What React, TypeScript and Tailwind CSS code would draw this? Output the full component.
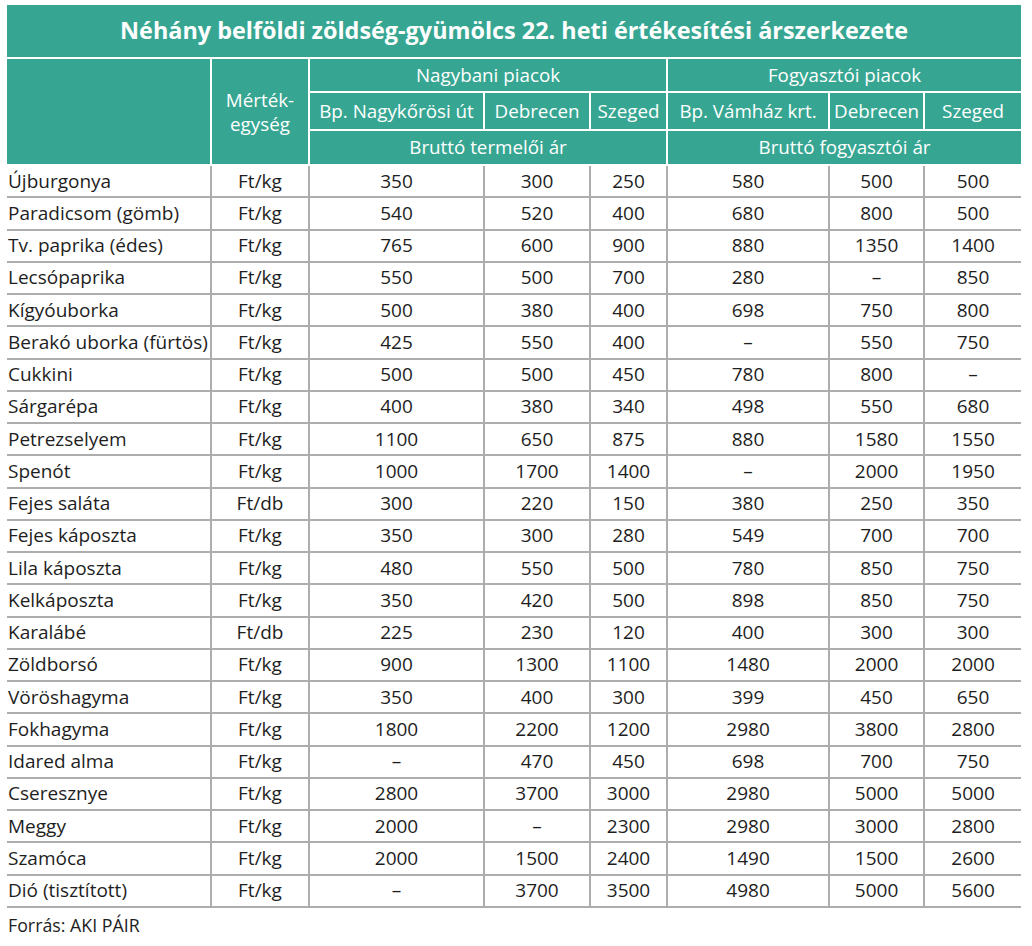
const rows: [string, string, string[]][] = [
  ['Újburgonya', 'Ft/kg', ['350', '300', '250', '580', '500', '500']],
  ['Paradicsom (gömb)', 'Ft/kg', ['540', '520', '400', '680', '800', '500']],
  ['Tv. paprika (édes)', 'Ft/kg', ['765', '600', '900', '880', '1350', '1400']],
  ['Lecsópaprika', 'Ft/kg', ['550', '500', '700', '280', '–', '850']],
  ['Kígyóuborka', 'Ft/kg', ['500', '380', '400', '698', '750', '800']],
  ['Berakó uborka (fürtös)', 'Ft/kg', ['425', '550', '400', '–', '550', '750']],
  ['Cukkini', 'Ft/kg', ['500', '500', '450', '780', '800', '–']],
  ['Sárgarépa', 'Ft/kg', ['400', '380', '340', '498', '550', '680']],
  ['Petrezselyem', 'Ft/kg', ['1100', '650', '875', '880', '1580', '1550']],
  ['Spenót', 'Ft/kg', ['1000', '1700', '1400', '–', '2000', '1950']],
  ['Fejes saláta', 'Ft/db', ['300', '220', '150', '380', '250', '350']],
  ['Fejes káposzta', 'Ft/kg', ['350', '300', '280', '549', '700', '700']],
  ['Lila káposzta', 'Ft/kg', ['480', '550', '500', '780', '850', '750']],
  ['Kelkáposzta', 'Ft/kg', ['350', '420', '500', '898', '850', '750']],
  ['Karalábé', 'Ft/db', ['225', '230', '120', '400', '300', '300']],
  ['Zöldborsó', 'Ft/kg', ['900', '1300', '1100', '1480', '2000', '2000']],
  ['Vöröshagyma', 'Ft/kg', ['350', '400', '300', '399', '450', '650']],
  ['Fokhagyma', 'Ft/kg', ['1800', '2200', '1200', '2980', '3800', '2800']],
  ['Idared alma', 'Ft/kg', ['–', '470', '450', '698', '700', '750']],
  ['Cseresznye', 'Ft/kg', ['2800', '3700', '3000', '2980', '5000', '5000']],
  ['Meggy', 'Ft/kg', ['2000', '–', '2300', '2980', '3000', '2800']],
  ['Szamóca', 'Ft/kg', ['2000', '1500', '2400', '1490', '1500', '2600']],
  ['Dió (tisztított)', 'Ft/kg', ['–', '3700', '3500', '4980', '5000', '5600']],
];

const head = 'bg-[#36a692] text-white border-2 border-white text-center font-normal p-0';

export default function App() {
  return (
    <div className="bg-white w-[1032px] h-[946px] pl-[7px] pt-[5px] font-['Open_Sans','Noto_Sans',sans-serif] text-[#1e1e1e]">
      <div className="w-[1014px] h-[52px] bg-[#36a692] text-white font-bold text-[23.4px] flex items-center justify-center">
        Néhány belföldi zöldség-gyümölcs 22. heti értékesítési árszerkezete
      </div>
      <table className="table-fixed border-collapse w-[1014px] mt-[2px] text-[18.8px] leading-none">
        <colgroup>
          <col className="w-[204px]" />
          <col className="w-[98px]" />
          <col className="w-[175px]" />
          <col className="w-[106px]" />
          <col className="w-[77px]" />
          <col className="w-[162px]" />
          <col className="w-[95px]" />
          <col className="w-[97px]" />
        </colgroup>
        <thead>
          <tr className="h-[33px]">
            <th rowSpan={3} className={`${head} border-l-0 border-t-0`} />
            <th rowSpan={3} className={`${head} border-t-0 leading-[24px]`}>
              Mérték-
              <br />
              egység
            </th>
            <th colSpan={3} className={`${head} border-t-0`}>Nagybani piacok</th>
            <th colSpan={3} className={`${head} border-t-0 border-r-0`}>Fogyasztói piacok</th>
          </tr>
          <tr className="h-[38px]">
            <th className={head}>Bp. Nagykőrösi út</th>
            <th className={head}>Debrecen</th>
            <th className={head}>Szeged</th>
            <th className={head}>Bp. Vámház krt.</th>
            <th className={head}>Debrecen</th>
            <th className={`${head} border-r-0`}>Szeged</th>
          </tr>
          <tr className="h-[35px]">
            <th colSpan={3} className={head}>Bruttó termelői ár</th>
            <th colSpan={3} className={`${head} border-r-0`}>Bruttó fogyasztói ár</th>
          </tr>
        </thead>
        <tbody className="text-[19px]">
          {rows.map(([name, unit, vals]) => (
            <tr key={name} className="h-[32.26px]">
              <td className="border-b-2 border-[#adadad] pl-[1px] whitespace-nowrap">{name}</td>
              <td className="border-b-2 border-l-2 border-[#adadad] text-center">{unit}</td>
              {vals.map((v, i) => (
                <td key={i} className="border-b-2 border-l-2 border-[#adadad] text-center">{v}</td>
              ))}
            </tr>
          ))}
        </tbody>
      </table>
      <div className="text-[17.8px] mt-[9px] pl-[1px] leading-none">Forrás: AKI PÁIR</div>
    </div>
  );
}
